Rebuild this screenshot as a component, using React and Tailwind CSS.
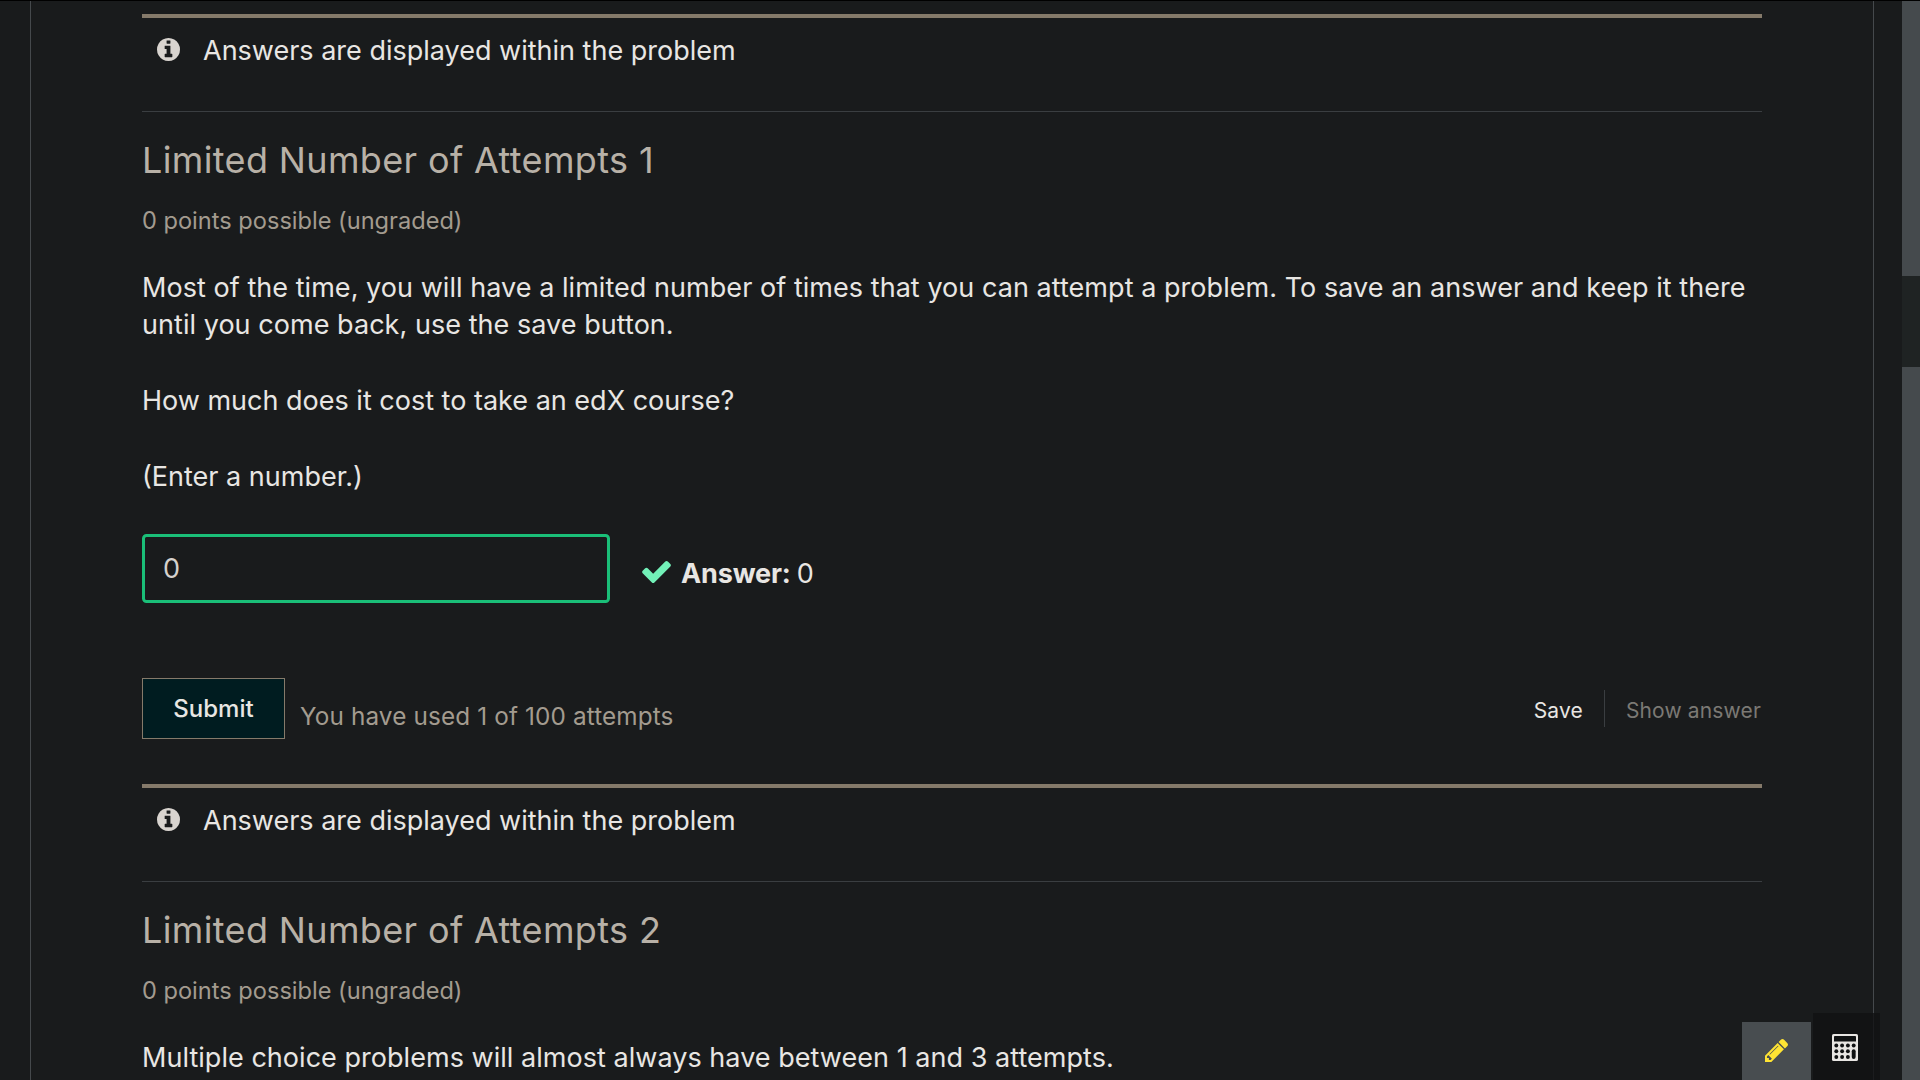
function InfoIcon() {
  return (
    <svg viewBox="128 128 1536 1536" className="size-[23px] shrink-0" fill="#d8d4cf">
      <path d="M1152 1376v-160q0-14-9-23t-23-9h-96v-512q0-14-9-23t-23-9h-320q-14 0-23 9t-9 23v160q0 14 9 23t23 9h96v320h-96q-14 0-23 9t-9 23v160q0 14 9 23t23 9h448q14 0 23-9t9-23zm-128-896v-160q0-14-9-23t-23-9h-192q-14 0-23 9t-9 23v160q0 14 9 23t23 9h192q14 0 23-9t9-23zm640 416q0 209-103 385.5t-279.5 279.5-385.5 103-385.5-103-279.5-279.5-103-385.5 103-385.5 279.5-279.5 385.5-103 385.5 103 279.5 279.5 103 385.5z" />
    </svg>
  );
}

function CheckIcon() {
  return (
    <svg viewBox="121 334 1550 1188" className="mb-[3px] h-[22px] w-[29px] shrink-0" fill="#72f1b8">
      <path d="M1671 566q0 40-28 68l-724 724-136 136q-28 28-68 28t-68-28l-136-136-362-362q-28-28-28-68t28-68l136-136q28-28 68-28t68 28l294 295 656-657q28-28 68-28t68 28l136 136q28 28 28 68z" />
    </svg>
  );
}

function PencilIcon() {
  return (
    <svg viewBox="128 149 1515 1515" className="size-[23px]" fill="#ffe433">
      <path d="M491 1536l91-91-235-235-91 91v107h128v128h107zm523-928q0-22-22-22-10 0-17 7l-542 542q-7 7-7 17 0 22 22 22 10 0 17-7l542-542q7-7 7-17zm-54-192l416 416-832 832h-416v-416zm683 96q0 53-37 90l-166 166-416-416 166-165q36-38 90-38 53 0 91 38l235 234q37 39 37 91z" />
    </svg>
  );
}

function CalculatorIcon() {
  return (
    <svg viewBox="0 0 26 27" className="h-[27px] w-[26px]">
      <rect width="26" height="27" rx="1.6" fill="#e8e6e3" />
      <g fill="#101213">
        <rect x="2" y="2" width="22" height="5.6" rx="0.4" />
        {[11.5, 17.2, 23].map((y) =>
          [4.3, 10.1, 15.9].map((x) => <circle key={`${x}-${y}`} cx={x} cy={y} r="1.95" />),
        )}
        <circle cx="21.7" cy="11.5" r="1.95" />
        <rect x="19.75" y="15.2" width="3.9" height="9.8" rx="1.95" />
      </g>
    </svg>
  );
}

function Notice() {
  return (
    <div className="h-[98px] border-t-4 border-b border-t-[#857a6a] border-b-[#3a3e41] pt-[14px] pl-[15px]">
      <div className="flex items-start gap-[23px]">
        <div className="pt-[6px]">
          <InfoIcon />
        </div>
        <span className="text-[27px] leading-[38px] text-[#e8e6e3]">Answers are displayed within the problem</span>
      </div>
    </div>
  );
}

function ProblemHeader({ title }) {
  return (
    <header className="pt-[23px]">
      <h3 className="text-[36px] leading-[50px] tracking-[0.36px] text-[#b8b1a7]">{title}</h3>
      <p className="mt-5 text-[23.6px] leading-[32px] text-[#a39b8f]">0 points possible (ungraded)</p>
    </header>
  );
}

function AnswerForm() {
  return (
    <>
      <div className="mt-[38.3px] flex items-center">
        <div className="flex h-[69px] w-[468px] items-center rounded-[4.5px] border-[3px] border-[#1abf78] pt-0.5 pl-[18px]">
          <span className="text-[27px] leading-[38px] text-[#d5d1cc]">0</span>
        </div>
        <div className="ml-8 flex items-center gap-[10px] pt-[11px] text-[27px] leading-[38px]">
          <CheckIcon />
          <div className="text-[#e8e6e3]">
            <b className="tracking-[-0.15px]">Answer:</b>
            <span className="ml-1.5">0</span>
          </div>
        </div>
      </div>
      <div className="mt-[75px] mb-[45.2px] flex h-[61px] items-start">
        <div className="flex h-[61px] w-[143px] items-center justify-center border border-[#857a6a] bg-[#001c20] pt-0.5 text-[24px] font-medium text-[#e8e6e3]">
          Submit
        </div>
        <span className="ml-[15px] pt-[21px] text-[24.3px] leading-[34px] tracking-[0.135px] text-[#a39b8f]">
          You have used 1 of 100 attempts
        </span>
        <div className="mt-3 ml-auto flex h-[37px] items-center text-[21px] tracking-[0.15px]">
          <span className="pt-[5px] pr-[21px] text-[#e8e6e3]">Save</span>
          <span className="flex h-[37px] items-center border-l border-[#3a3e41] pt-[5px] pr-px pl-[21px] text-[#7b7974]">
            Show answer
          </span>
        </div>
      </div>
    </>
  );
}

export default function App() {
  return (
    <div className="flex h-screen w-full flex-col overflow-hidden bg-[#191b1c] font-['Inter',sans-serif]">
      <div className="h-px shrink-0 bg-black" />
      <div className="flex min-h-0 flex-1">
        <main className="mr-[28px] ml-[30px] min-w-0 flex-1 overflow-hidden border-x border-[#45494c] px-[111px] pt-[13px]">
          <Notice />
          <section>
            <ProblemHeader title="Limited Number of Attempts 1" />
            <div className="mt-[31.7px] flex flex-col gap-[37.8px] text-[27px] leading-[37.8px] text-[#e8e6e3]">
              <p className="-mr-2 tracking-[0.045px]">
                Most of the time, you will have a limited number of times that you can attempt a problem. To save an answer and
                keep it there until you come back, use the save button.
              </p>
              <p>How much does it cost to take an edX course?</p>
              <p>(Enter a number.)</p>
            </div>
            <AnswerForm />
          </section>
          <Notice />
          <section>
            <ProblemHeader title="Limited Number of Attempts 2" />
            <p className="mt-[32.2px] text-[27px] leading-[37.8px] tracking-[0.035px] text-[#e8e6e3]">
              Multiple choice problems will almost always have between 1 and 3 attempts.
            </p>
          </section>
        </main>
        <div className="flex w-[18px] flex-col bg-[#454a4d]">
          <div className="mt-[275px] h-[91px] bg-[#1f2323]" />
        </div>
      </div>
      <div className="absolute right-[40px] bottom-0 flex items-end gap-0.5">
        <div className="flex h-[58px] w-[69px] justify-center bg-[#484d50] pt-[17px]">
          <PencilIcon />
        </div>
        <div className="flex h-[67px] w-[67px] bg-[#101213]/80 pt-[21px] pl-[19px]">
          <CalculatorIcon />
        </div>
      </div>
    </div>
  );
}
